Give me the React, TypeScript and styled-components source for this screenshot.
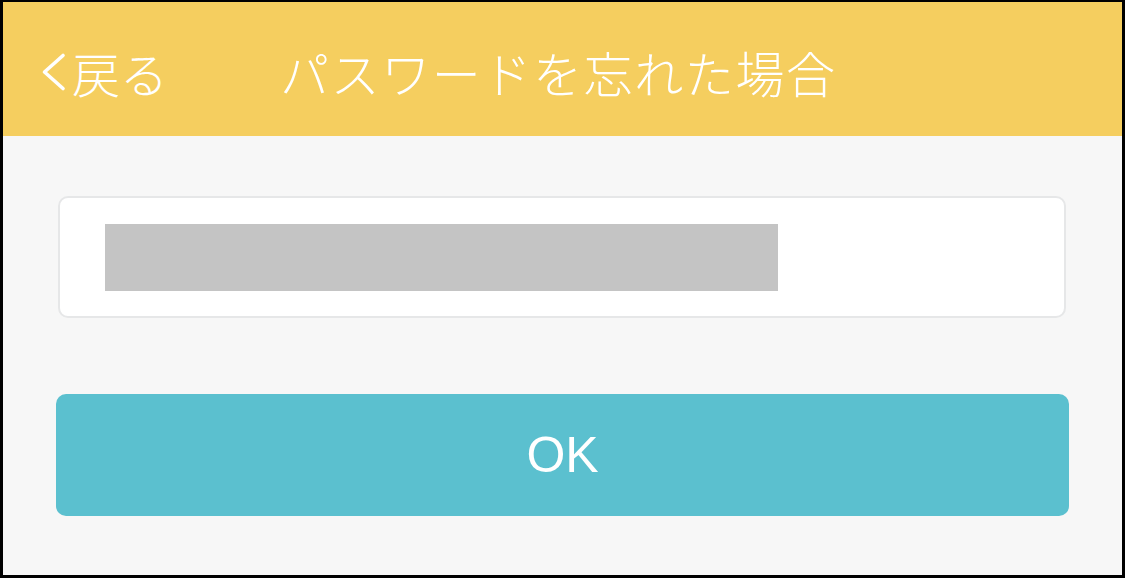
import styled, { createGlobalStyle } from 'styled-components';

const GlobalStyle = createGlobalStyle`
  html, body {
    margin: 0;
    padding: 0;
    background: #000;
  }
  body {
    font-family: "Noto Sans CJK JP", "Liberation Sans", sans-serif;
  }
`;

const Frame = styled.div`
  box-sizing: border-box;
  width: 1125px;
  height: 578px;
  border: 3px solid #000;
  border-top-width: 2px;
  background: #f7f7f7;
  display: flex;
  flex-direction: column;
`;

const Header = styled.header`
  height: 134px;
  background: #f5ce5f;
  display: flex;
  align-items: center;
  padding: 5px 0 0 37px;
  box-sizing: border-box;
  color: #fff;
`;

const BackButton = styled.div`
  display: flex;
  align-items: center;
  gap: 6px;
  font-size: 48px;
  font-weight: 300;
  line-height: 1;
  cursor: pointer;
`;

const Title = styled.h1`
  margin: 0 0 0 112px;
  font-size: 49px;
  font-weight: 300;
  line-height: 1;
  letter-spacing: 1.6px;
`;

const Body = styled.main`
  display: flex;
  flex-direction: column;
  padding: 60px 53px 0 53px;
  gap: 76px;
`;

const InputBox = styled.div`
  box-sizing: border-box;
  height: 122px;
  margin: 0 3px 0 2px;
  background: #fff;
  border: 2px solid #e6e7e8;
  border-radius: 10px;
  display: flex;
  align-items: center;
  padding-left: 45px;
`;

const Masked = styled.div`
  width: 673px;
  height: 67px;
  background: #c4c4c4;
`;

const OkButton = styled.button`
  height: 122px;
  border: none;
  border-radius: 10px;
  background: #5bc0cf;
  color: #fff;
  font-family: "Liberation Sans", Arial, sans-serif;
  font-size: 50px;
  cursor: pointer;
`;

const Chevron = () => (
  <svg width="26" height="40" viewBox="0 0 26 40">
    <path d="M23 3.5 L4.5 20 L23 36.5" fill="none" stroke="#fff" strokeWidth="3.6" strokeLinecap="round" strokeLinejoin="round" />
  </svg>
);

export default function App() {
  return (
    <>
      <GlobalStyle />
      <Frame>
        <Header>
          <BackButton>
            <Chevron />
            <span>戻る</span>
          </BackButton>
          <Title>パスワードを忘れた場合</Title>
        </Header>
        <Body>
          <InputBox>
            <Masked />
          </InputBox>
          <OkButton>OK</OkButton>
        </Body>
      </Frame>
    </>
  );
}
